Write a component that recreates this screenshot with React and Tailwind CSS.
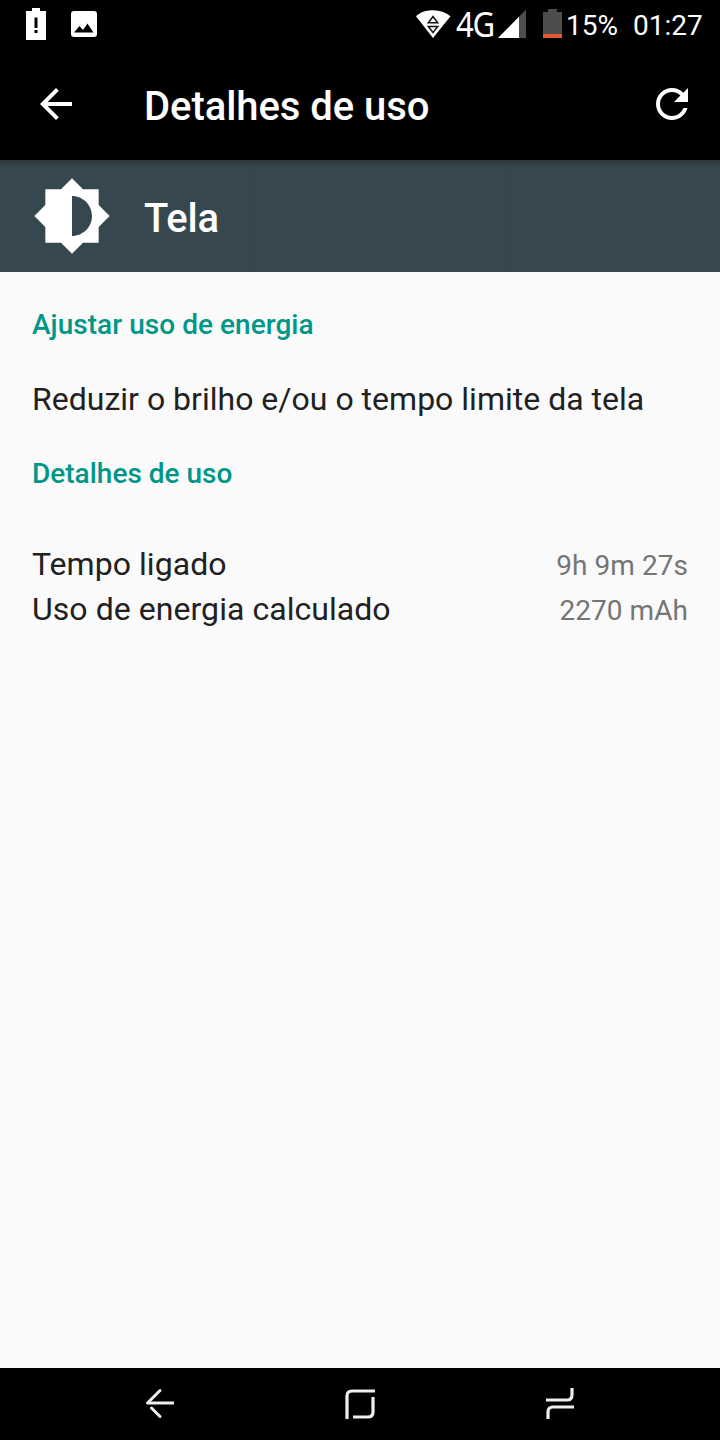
const usage = [
  { label: "Tempo ligado", value: "9h 9m 27s" },
  { label: "Uso de energia calculado", value: "2270 mAh" },
];

function StatusBar() {
  return (
    <div className="flex h-12 shrink-0 items-center justify-between text-white">
      <div className="flex">
        <svg width="120" height="48" viewBox="0 0 120 48" fill="none">
          <path d="M26 11h6V8h8v3h6v29H26z" fill="#fff" />
          <path d="M34.500 17.500h3V28h-3zM34.500 30h3v3h-3z" fill="#000" />
          <rect x="71" y="11" width="26" height="26" rx="3" fill="#fff" />
          <path d="M74 32.500l5.500-6.500 3.500 4 4.500-6.500 6 9z" fill="#000" />
        </svg>
      </div>
      <div className="flex h-12 items-center pr-4">
        <svg width="36" height="48" viewBox="415 0 36 48" fill="none">
          <path d="M416 16.200C420 12.400 426 10.300 433 10.300s13 2.100 17.500 5.900L433 38z" fill="#fff" />
          <path d="M428.300 22.700L433 16.500l4.700 6.200zM428.300 26.500h9.400L433 32.500z" stroke="#111" strokeWidth="1.500" />
        </svg>
        <div className="ml-[5px] w-[41px]">
          <span className="block w-[46px] origin-left scale-x-[0.890] font-['Noto_Sans'] text-[35px] leading-[48px] tracking-[-1.500px]">
            4G
          </span>
        </div>
        <svg width="69" height="48" viewBox="497 0 69 48" fill="none">
          <path d="M526 9.500V38h-28z" fill="#4d4d4d" />
          <path d="M519 16.800V38h-21z" fill="#fff" />
          <path d="M543 12h5V9h9v3h5v22h-19z" fill="#4d4d4d" />
          <path d="M543 34h19v4h-19z" fill="#e25a33" />
        </svg>
        <span className="pt-[3px] text-[28px] leading-none">15%</span>
        <span className="ml-[15px] w-[71px] pt-[3px] text-[28px] leading-none">01:27</span>
      </div>
    </div>
  );
}

function AppBar() {
  return (
    <header className="flex h-28 shrink-0 items-center px-6 pl-8 text-white">
      <svg width="48" height="48" viewBox="0 0 24 24" fill="currentColor">
        <path d="M20 11H7.830l5.590-5.590L12 4l-8 8 8 8 1.410-1.410L7.830 13H20v-2z" />
      </svg>
      <h1 className="ml-16 flex-1 pt-1.5 text-[40px] leading-none font-medium tracking-[-0.060px]">Detalhes de uso</h1>
      <svg width="48" height="48" viewBox="0 0 24 24" fill="currentColor">
        <path d="M17.650 6.350C16.200 4.900 14.210 4 12 4c-4.420 0-7.990 3.580-7.990 8s3.570 8 7.990 8c3.730 0 6.840-2.550 7.730-6h-2.080c-.82 2.330-3.040 4-5.650 4-3.310 0-6-2.690-6-6s2.690-6 6-6c1.660 0 3.140.69 4.220 1.780L13 11h7V4l-2.350 2.350z" />
      </svg>
    </header>
  );
}

function NavBar() {
  return (
    <nav className="flex h-[72px] shrink-0 items-center justify-center gap-[152px] bg-black text-[#eee]">
      <svg width="48" height="48" viewBox="136 1380 48 48" fill="none" stroke="currentColor" strokeWidth="3">
        <path d="M174 1403h-26" />
        <path d="M160 1390.500L147.500 1403M151.500 1408l8.500 8.500" strokeLinecap="round" />
      </svg>
      <svg width="48" height="48" viewBox="336 1380 48 48" fill="none" stroke="currentColor" strokeWidth="3.200">
        <path d="M347 1419v-23q0-5 5-5H375M373 1397v15q0 5-5 5h-15" />
      </svg>
      <svg width="48" height="48" viewBox="536 1380 48 48" fill="none" stroke="currentColor" strokeWidth="3.200">
        <path d="M546 1400h21q5 0 5-5v-7M574 1407h-21q-5 0-5 5v7" />
      </svg>
    </nav>
  );
}

export default function App() {
  return (
    <div className="flex h-[1440px] w-[720px] flex-col overflow-hidden bg-black font-[Roboto,sans-serif]">
      <StatusBar />
      <AppBar />

      <div className="flex h-28 shrink-0 items-center bg-[#37474f] bg-linear-to-b from-[#2e373b] to-[#37474f] to-[8px] pl-8 text-white">
        <svg width="80" height="80" viewBox="0 0 24 24" fill="currentColor">
          <path d="M20 15.310L23.310 12 20 8.690V4h-4.690L12 .69 8.690 4H4v4.690L.69 12 4 15.310V20h4.690L12 23.310 15.310 20H20v-4.690zM12 18V6c3.310 0 6 2.690 6 6s-2.690 6-6 6z" />
        </svg>
        <h2 className="ml-8 pt-1.5 text-[40px] leading-none font-medium tracking-[-0.200px]">Tela</h2>
      </div>

      <main className="flex-1 bg-[#fafafa] px-8 pt-9 text-[#212121]">
        <h3 className="text-[28px] leading-[33px] font-medium tracking-[0.040px] text-[#009688]">Ajustar uso de energia</h3>
        <p className="mt-[39px] text-[32px] leading-[38px] tracking-[0.010px]">Reduzir o brilho e/ou o tempo limite da tela</p>
        <h3 className="mt-[39px] text-[28px] leading-[33px] font-medium text-[#009688]">Detalhes de uso</h3>
        <div className="mt-[50px]">
          {usage.map((item) => (
            <div key={item.label} className="flex h-[45px] items-baseline justify-between">
              <span className="text-[32px] tracking-[0.050px]">{item.label}</span>
              <span className="text-[28px] tracking-[0.060px] text-[#757575]">{item.value}</span>
            </div>
          ))}
        </div>
      </main>

      <NavBar />
    </div>
  );
}
